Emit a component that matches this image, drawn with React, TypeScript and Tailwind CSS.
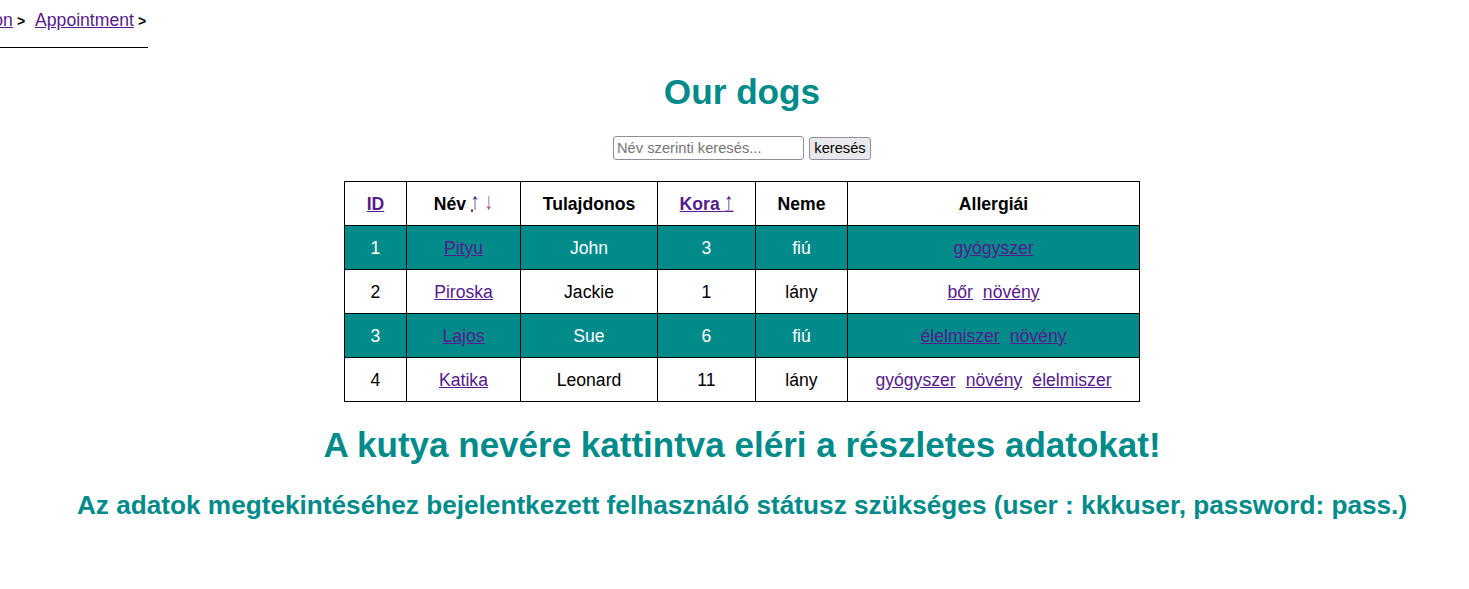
import { useState } from 'react';

interface Dog {
  id: number;
  name: string;
  owner: string;
  age: number;
  sex: string;
  allergies: string[];
}

const dogs: Dog[] = [
  { id: 1, name: 'Pityu', owner: 'John', age: 3, sex: 'fiú', allergies: ['gyógyszer'] },
  { id: 2, name: 'Piroska', owner: 'Jackie', age: 1, sex: 'lány', allergies: ['bőr', 'növény'] },
  { id: 3, name: 'Lajos', owner: 'Sue', age: 6, sex: 'fiú', allergies: ['élelmiszer', 'növény'] },
  { id: 4, name: 'Katika', owner: 'Leonard', age: 11, sex: 'lány', allergies: ['gyógyszer', 'növény', 'élelmiszer'] },
];

const link = 'text-[#551a8b] underline';
const cell = 'border border-black h-[44px] text-center align-middle';
const arrow = 'inline-block font-normal scale-y-[1.35] origin-[50%_80%]';

export default function App() {
  const [query, setQuery] = useState('');

  return (
    <div className="min-h-[589px] overflow-hidden bg-white text-black font-['Liberation_Sans',Arial,sans-serif] text-[17.6px]">
      <nav className="ml-[-81px] w-[229px] border-b border-black pt-[7px] pb-[14px] whitespace-nowrap">
        <a href="#" className={link}>Registration</a>
        <b className="text-[14px] mx-[4px]">&gt;</b>
        <a href="#" className={link + ' ml-[6px]'}>Appointment</a>
        <b className="text-[14px] ml-[4px]">&gt;</b>
      </nav>

      <main className="pl-[15px] flex flex-col items-center">
        <h1 className="mt-[24px] text-[35.2px] leading-[40px] font-bold text-[#008b8b]">Our dogs</h1>

        <form className="mt-[24px] flex items-center gap-[5px]" onSubmit={(e) => e.preventDefault()}>
          <input
            type="text"
            value={query}
            onChange={(e) => setQuery(e.target.value)}
            placeholder="Név szerinti keresés..."
            className="w-[191px] h-[24px] px-[3px] border border-[#8f8f9d] rounded-[3px] text-[14.7px] placeholder:text-[#757575] outline-none"
          />
          <button
            type="submit"
            className="w-[62px] h-[23px] border border-[#8f8f9d] rounded-[3px] bg-[#e9e9ed] text-[14.7px] leading-none"
          >
            keresés
          </button>
        </form>

        <table className="mt-[21px] w-[796px] border-collapse table-fixed">
          <thead>
            <tr>
              <th className={cell + ' w-[62px]'}>
                <a href="#" className={link}>ID</a>
              </th>
              <th className={cell + ' w-[114px]'}>
                Név <a href="#" className="text-[#551a8b]"><span className={arrow + ' underline decoration-dotted'}>↑</span></a>{' '}
                <a href="#" className="text-[#b0508a]"><span className={arrow}>↓</span></a>
              </th>
              <th className={cell + ' w-[137px]'}>Tulajdonos</th>
              <th className={cell + ' w-[98px]'}>
                <a href="#" className={link}>Kora <span className={arrow + ' underline'}>↑</span></a>
              </th>
              <th className={cell + ' w-[92px]'}>Neme</th>
              <th className={cell}>Allergiái</th>
            </tr>
          </thead>
          <tbody>
            {dogs.map((dog, i) => (
              <tr key={dog.id} className={i % 2 === 0 ? 'bg-[#008b8b] text-white' : 'bg-white text-black'}>
                <td className={cell}>{dog.id}</td>
                <td className={cell}>
                  <a href="#" className={link}>{dog.name}</a>
                </td>
                <td className={cell}>{dog.owner}</td>
                <td className={cell}>{dog.age}</td>
                <td className={cell}>{dog.sex}</td>
                <td className={cell}>
                  <span className="inline-flex gap-[10px]">
                    {dog.allergies.map((a) => (
                      <a key={a} href="#" className={link}>{a}</a>
                    ))}
                  </span>
                </td>
              </tr>
            ))}
          </tbody>
        </table>

        <h2 className="mt-[23px] text-[35px] leading-[40px] font-bold text-[#008b8b]">
          A kutya nevére kattintva eléri a részletes adatokat!
        </h2>
        <h3 className="mt-[25px] text-[26.2px] leading-[30px] font-bold text-[#008b8b] whitespace-nowrap">
          Az adatok megtekintéséhez bejelentkezett felhasználó státusz szükséges (user : kkkuser, password: pass.)
        </h3>
      </main>
    </div>
  );
}
